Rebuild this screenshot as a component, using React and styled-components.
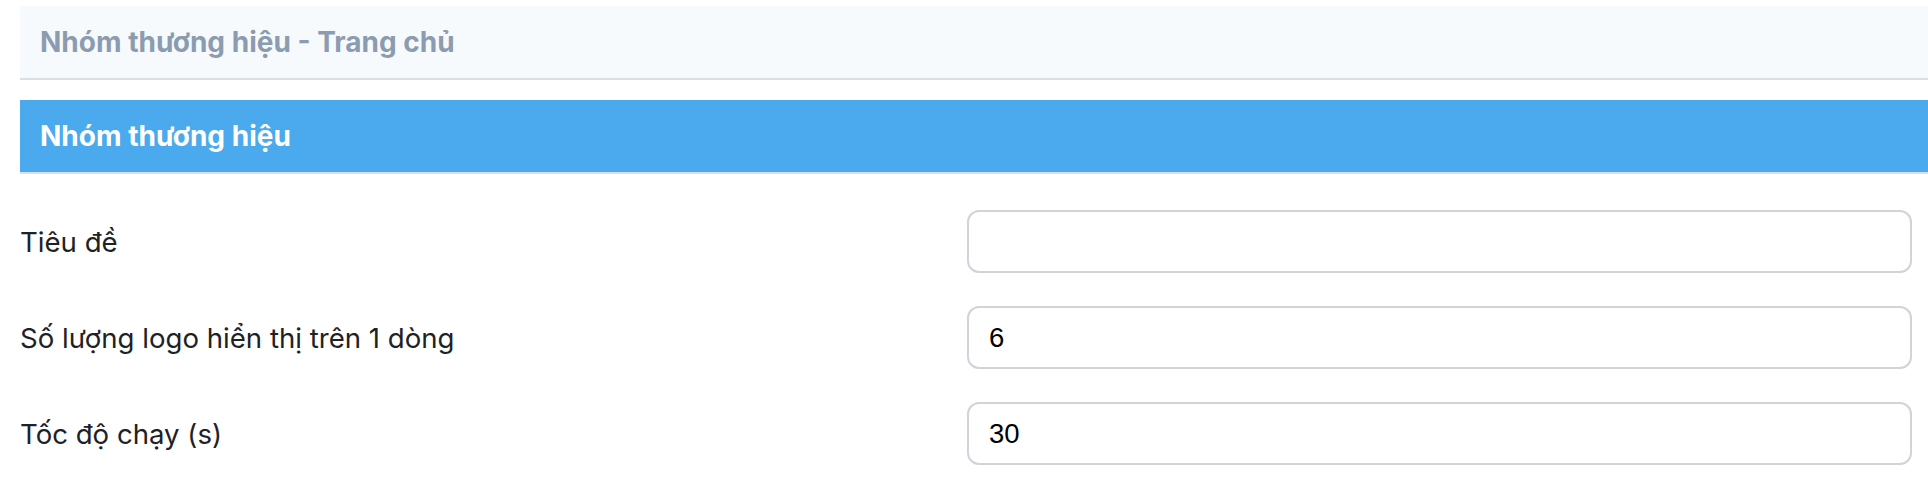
import React from "react";
import styled, { createGlobalStyle } from "styled-components";

const GlobalStyle = createGlobalStyle`
  html, body { margin: 0; padding: 0; background: #ffffff; }
  body { font-family: Inter, "Noto Sans", sans-serif; }
  * { box-sizing: border-box; }
`;

const Page = styled.div`
  padding: 6px 0 0 20px;
  width: 1928px;
`;

const Breadcrumb = styled.div`
  height: 74px;
  background: #f7fafc;
  border-bottom: 2px solid #d7dfe7;
  display: flex;
  align-items: center;
  padding-left: 20px;
  font-family: Inter, "Noto Sans", sans-serif;
  font-weight: 700;
  font-size: 28px;
  color: #8c9cb0;
`;

const SectionBar = styled.div`
  margin-top: 20px;
  height: 74px;
  background: #4aaaed;
  border-bottom: 2px solid #d7dfe7;
  display: flex;
  align-items: center;
  padding-left: 20px;
  font-family: Inter, "Noto Sans", sans-serif;
  font-weight: 700;
  font-size: 28px;
  color: #ffffff;
`;

const Form = styled.div`
  width: 1892px;
  padding-top: 36px;
  display: flex;
  flex-direction: column;
  gap: 33px;
`;

const Row = styled.div`
  display: grid;
  grid-template-columns: 947px 945px;
  align-items: center;
`;

const Label = styled.label`
  font-family: Inter, "Noto Sans", sans-serif;
  font-size: 27.6px;
  color: #1e2226;
`;

const Input = styled.input`
  height: 63px;
  width: 100%;
  border: 2px solid #cfd3da;
  border-radius: 12px;
  padding: 0 20px;
  font-family: "Liberation Sans", Arial, sans-serif;
  font-size: 27.5px;
  color: #000;
  background: #fff;
  outline: none;
`;

const fields = [
  { label: "Tiêu đề", value: "" },
  { label: "Số lượng logo hiển thị trên 1 dòng", value: "6" },
  { label: "Tốc độ chạy (s)", value: "30" },
];

export default function App() {
  return (
    <>
      <GlobalStyle />
      <Page>
        <Breadcrumb>Nhóm thương hiệu - Trang chủ</Breadcrumb>
        <SectionBar>Nhóm thương hiệu</SectionBar>
        <Form>
          {fields.map((f) => (
            <Row key={f.label}>
              <Label>{f.label}</Label>
              <Input defaultValue={f.value} />
            </Row>
          ))}
        </Form>
      </Page>
    </>
  );
}
